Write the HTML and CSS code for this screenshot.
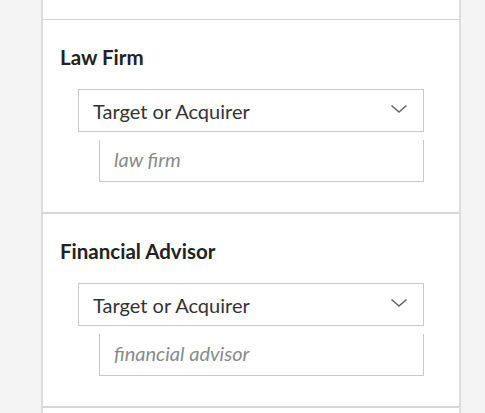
FILE: index.html
```html
<!DOCTYPE html>
<html>
<head>
<meta charset="utf-8">
<link rel="stylesheet" href="styles.css">
</head>
<body>
<div class="panel">
  <div class="section section-top"></div>
  <div class="section">
    <h3 class="heading">Law Firm</h3>
    <div class="select">
      <span class="select-text">Target or Acquirer</span>
      <svg class="chevron" width="18" height="10" viewBox="0 0 18 10"><path d="M1.5 1.5 L9 8 L16.5 1.5" fill="none" stroke="#666" stroke-width="1.6"/></svg>
    </div>
    <div class="input"><span class="placeholder">law firm</span></div>
  </div>
  <div class="section">
    <h3 class="heading">Financial Advisor</h3>
    <div class="select">
      <span class="select-text">Target or Acquirer</span>
      <svg class="chevron" width="18" height="10" viewBox="0 0 18 10"><path d="M1.5 1.5 L9 8 L16.5 1.5" fill="none" stroke="#666" stroke-width="1.6"/></svg>
    </div>
    <div class="input"><span class="placeholder">financial advisor</span></div>
  </div>
  <div class="section"></div>
</div>
</body>
</html>
```
FILE: styles.css
```css
html, body {
  margin: 0;
  padding: 0;
  background: #f4f4f4;
  font-family: Lato, "Open Sans", sans-serif;
}
.panel {
  margin-left: 41px;
  width: 416px;
  background: #fff;
  border-left: 2px solid #dcdcdc;
  border-right: 2px solid #dcdcdc;
  min-height: 413px;
}
.section {
  border-bottom: 2px solid #d6d6e0;
  padding: 24px 35px 30px 17px;
}
.section-top {
  height: 20px;
  padding: 0;
  box-sizing: border-box;
  border-bottom-width: 1.5px;
}
.heading {
  margin: 0;
  font-size: 20.5px;
  font-weight: 700;
  color: #222;
  line-height: 26px;
}
.select {
  margin-top: 19px;
  margin-left: 18px;
  height: 43px;
  box-sizing: border-box;
  border: 1.5px solid #c9c9c9;
  display: flex;
  align-items: center;
  justify-content: space-between;
  padding: 0 15px 0 14px;
}
.select-text {
  font-size: 20px;
  color: #333;
}
.chevron {
  display: block;
  margin-top: -3px;
}
.input {
  margin-top: 8px;
  margin-left: 39px;
  height: 42px;
  box-sizing: border-box;
  border: 1.5px solid #c9c9c9;
  border-top: none;
  display: flex;
  align-items: center;
  padding: 0 14px 4px 14px;
}
.placeholder {
  font-size: 20px;
  font-style: italic;
  color: #8a8a8a;
}
```
